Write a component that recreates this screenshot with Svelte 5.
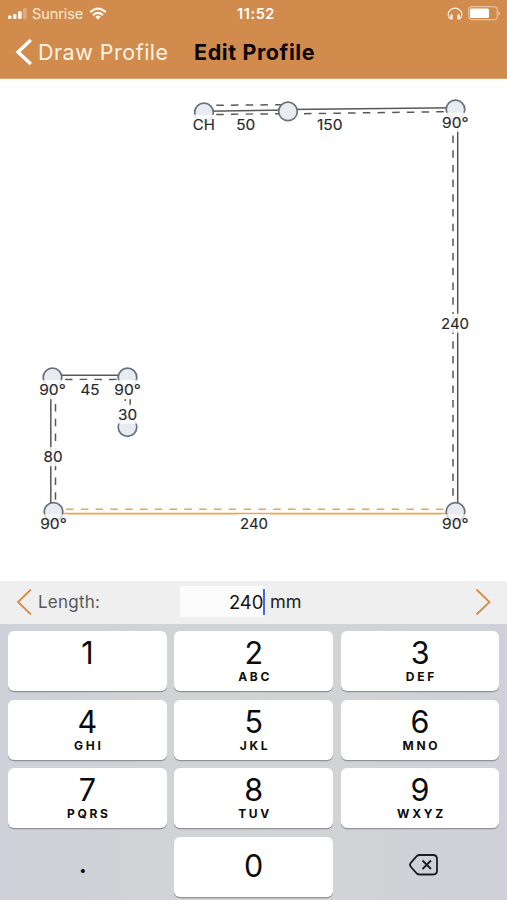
<script>
  const keys = [
    ['1', ''], ['2', 'ABC'], ['3', 'DEF'],
    ['4', 'GHI'], ['5', 'JKL'], ['6', 'MNO'],
    ['7', 'PQRS'], ['8', 'TUV'], ['9', 'WXYZ']
  ];
  const nodes = [[204, 112.5], [455.5, 109.5], [52.5, 377.5], [127.5, 377.5], [127.5, 427], [53.5, 512], [455.5, 512]];
  // label, centre x, baseline y, mask width, text width
  const labels = [
    ['CH', 203.8, 129.7, 24, 22], ['50', 245.7, 129.7, 20, 19], ['150', 329.7, 129.7, 27, 25.5],
    ['90°', 455.3, 127.7, 27, 26.5], ['240', 455, 328.7, 28, 28],
    ['90°', 52.5, 395.2, 28, 26.5], ['45', 90, 395.2, 20, 19], ['90°', 127.6, 395.2, 28, 26.5],
    ['30', 127.5, 419.7, 20, 19], ['80', 53, 462.2, 20, 19],
    ['90°', 53.5, 529.2, 28, 26.5], ['240', 254, 529.2, 32, 28], ['90°', 455.3, 529.2, 28, 26.5]
  ];
</script>

<div class="screen">
  <header>
    <div class="status">
      <div class="carrier">
        <svg width="20" height="14" viewBox="0 0 20 14" fill="#fff"><rect x="0" y="8.5" width="3.5" height="3.5" rx="1"/><rect x="5" y="7" width="3.5" height="5" rx="1"/><rect x="10" y="4.3" width="3.7" height="7.7" rx="1"/><rect x="15" y="1" width="3.7" height="11" rx="1" opacity=".3"/></svg>
        <span>Sunrise</span>
        <svg class="wifi" width="18" height="14" viewBox="0 0 18 14" fill="none" stroke="#fff" stroke-width="2.2"><path d="M1.2 5.1Q9-2 16.8 5.1M4 8.1Q9 3.8 14 8.1"/><path d="M6.2 9.8Q9 7.4 11.8 9.8L9 12.7Z" fill="#fff" stroke="none"/></svg>
      </div>
      <span class="time">11:52</span>
      <div class="power">
        <svg width="16" height="14" viewBox="0 0 16 14" fill="none" stroke="#fff0df"><path d="M3 11.8C1.7 10.5 1.2 9 1.2 7.4a6.8 6.3 0 0 1 13.6 0C14.8 9 14.3 10.5 13 11.8" stroke-width="1.2"/><path d="M4.4 8.6v3M11.6 8.6v3" stroke-width="2.5" stroke-linecap="round"/></svg>
        <svg width="32" height="15" viewBox="0 0 32 15"><rect x=".7" y=".7" width="28.6" height="13" rx="3.5" fill="none" stroke="#fff" stroke-opacity=".45" stroke-width="1.2"/><rect x="2" y="2.5" width="19" height="9.5" rx="1.5" fill="#fff"/><path d="M30.3 5v4.5q1.7-.8 1.7-2.25T30.3 5" fill="#fff" opacity=".5"/></svg>
      </div>
    </div>
    <nav>
      <svg width="18" height="28" viewBox="0 0 18 28" fill="none" stroke="#fff" stroke-width="3.4"><path d="M15.8 2 3 14l12.8 12"/></svg>
      <span class="back">Draw Profile</span>
      <h1>Edit Profile</h1>
    </nav>
  </header>

  <main>
    <svg width="507" height="502" viewBox="0 79 507 502">
      <g fill="none" stroke="#58585c" stroke-width="1.5">
        <path d="M204 111.2L288 110M288 109.5L455 107.7M457.7 110V512M52 375.3H127M50.8 380V510"/>
        <g stroke-dasharray="7.5 7.2">
          <path d="M216.3 105.3L282 104.7M216.3 114.5L280 113.8M304 113.7L445 111.7"/>
          <path d="M453 135.5V505" />
          <path d="M65 379.5H117M55.5 404V506"/>
          <path d="M130.2 399V430M125.2 398V401"/>
        </g>
      </g>
      <path d="M62 513.6H449" stroke="#efa34f" stroke-width="1.8"/>
      <path d="M66 509.2H448" stroke="#efa34f" stroke-width="1.5" stroke-dasharray="7.5 7.3"/>
      <g fill="#e8ecf1" stroke="#68717e" stroke-width="1.7">
        {#each nodes as [x, y]}
          <circle cx={x} cy={y} r="9.3"/>
        {/each}
        <circle cx="288" cy="111.4" r="9.3"/>
      </g>
      {#each labels as [text, x, y, width, length]}
        <rect x={x - width / 2} y={y - 15} {width} height="19" fill="#fff" fill-opacity={y > 500 ? 0.7 : 0.85}/>
      {/each}
      <g font-family="Inter, sans-serif" font-size="14.8" fill="#29292c" stroke="#29292c" stroke-width=".15" text-anchor="middle">
        {#each labels as [text, x, y, width, length]}
          <text {x} {y} textLength={length} lengthAdjust="spacingAndGlyphs">{text}</text>
        {/each}
      </g>
    </svg>
  </main>

  <section class="editor">
    <svg width="18" height="28" viewBox="0 0 18 28" fill="none" stroke="#d48c49" stroke-width="1.8"><path d="M16 1.5 3 14l13 12.5"/></svg>
    <span class="label">Length:</span>
    <div class="field">240<i></i></div>
    <span class="unit">mm</span>
    <svg class="next" width="18" height="28" viewBox="0 0 18 28" fill="none" stroke="#d48c49" stroke-width="1.8"><path d="M2.5 1.5 15.5 14l-13 12.5"/></svg>
  </section>

  <section class="keyboard">
    {#each keys as [digit, letters]}
      <button><span class="digit">{digit}</span><span class="letters">{letters}</span></button>
    {/each}
    <button class="plain"><span class="point">.</span></button>
    <button class="zero"><span class="digit">0</span></button>
    <button class="plain erase" aria-label="Delete">
      <svg width="30" height="24" viewBox="0 0 30 24" fill="none" stroke="#1c1c20" stroke-width="1.8"><path d="M10.5 2H24q4 0 4 4v11.5q0 4-4 4H10.5q-1.5 0-2.6-1L2 14q-2-2.2 0-4.4L7.9 3q1.1-1 2.6-1Z"/><path d="m13.5 7.5 8.5 8.5m0-8.5L13.5 16"/></svg>
    </button>
  </section>
</div>

<style>
  :global(body) { margin: 0; background: #fff; }
  .screen { width: 507px; height: 900px; display: flex; flex-direction: column; overflow: hidden; font-family: Inter, sans-serif; }
  svg { display: block; flex: none; }
  header { height: 79px; background: #d18c4d; box-sizing: border-box; border-bottom: 1px solid #dda775; }
  .status { height: 27px; display: grid; grid-template-columns: 1fr auto 1fr; align-items: center; color: #fff; font-size: 14.5px; padding: 0 8px; }
  .carrier { display: flex; align-items: center; opacity: .93; }
  .carrier span { margin-left: 4px; font-size: 14.5px; letter-spacing: -.1px; color: #fff0df; }
  .wifi { margin-left: 6px; }
  .time { font-weight: 600; font-size: 14.5px; letter-spacing: .55px; padding-left: 5px; }
  .power { display: flex; justify-content: flex-end; align-items: center; gap: 5px; margin-right: -1px; }
  nav { height: 50px; display: flex; align-items: center; padding-left: 15px; }
  .back { margin-left: 5px; width: 156px; font-size: 21.5px; letter-spacing: .5px; color: #fff3e5; white-space: nowrap; }
  h1 { margin: 0; font-size: 21.5px; font-weight: 650; letter-spacing: .6px; white-space: nowrap; color: #0c0703; }
  main { height: 502px; background: #fff; }
  .editor { height: 43px; background: #efefef; display: flex; align-items: center; padding: 0 15px 2px; box-sizing: border-box; }
  .label { width: 142px; margin-left: 5px; font-size: 17px; letter-spacing: .25px; color: #58585b; }
  .field { width: 86px; height: 31px; background: #fcfcfc; display: flex; align-items: center; justify-content: flex-end; font-size: 18.5px; color: #151515; }
  .field i { width: 2.5px; height: 26px; background: #4568e6; margin-left: -1px; margin-right: 1px; }
  .unit { margin-left: 4px; font-size: 18px; color: #222; }
  .next { margin-left: auto; }
  .keyboard { flex: 1; display: grid; grid-template-columns: repeat(3, 1fr); grid-template-rows: repeat(4, 60px); gap: 8.5px 7.5px; padding: 7px 7.5px 0 8px; background: linear-gradient(90deg, #cfd0d9, #d2d3d5 35%, #d2d3d5 65%, #cfd0d9); }
  button { border: 0; margin: 0; padding: 4px 0 0; border-radius: 6px; background: #fff; box-shadow: 0 1.2px 0 #929399; color: #0b0b0b; display: flex; flex-direction: column; align-items: center; font-family: inherit; }
  .digit { font-size: 30.5px; line-height: 35px; }
  .letters { font-size: 12px; font-weight: 700; line-height: 14px; letter-spacing: 2.7px; margin-right: -2.7px; }
  .plain { background: none; box-shadow: none; }
  .zero { padding-top: 11px; }
  .point { font-size: 30px; line-height: 34px; padding: 4px 9px 0 0; }
  .erase { padding: 16px 0 0 7px; }
</style>
